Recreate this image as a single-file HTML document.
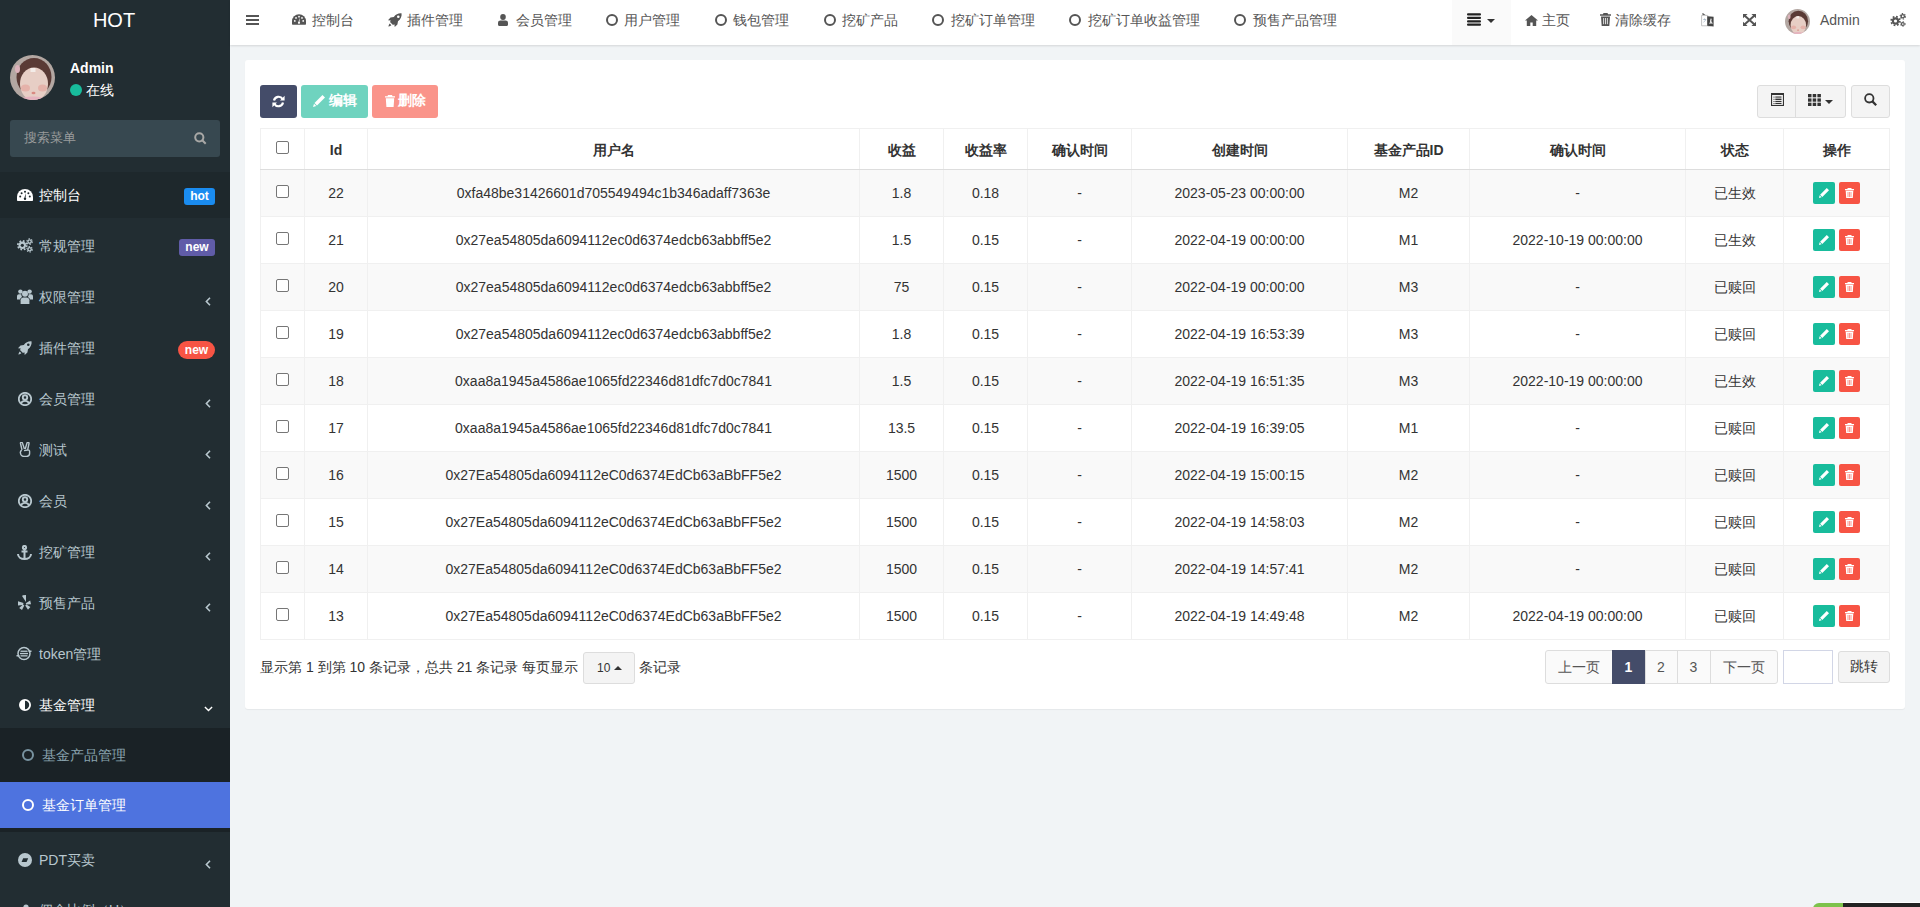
<!DOCTYPE html>
<html><head><meta charset="utf-8"><style>*{box-sizing:border-box}
html,body{margin:0;padding:0}
body{width:1920px;height:907px;overflow:hidden;position:relative;background:#f1f4f6;font-family:"Liberation Sans",sans-serif;font-size:14px;color:#333}
.abs{position:absolute}
svg{display:block}
.ava{border-radius:50%;overflow:hidden;background:radial-gradient(circle at 50% 60%,#f0c8bd 0,#e8b4a8 32%,#b98478 44%,#4a302a 58%,#8e6d63 100%)}
.badge{position:absolute;color:#fff;font-weight:bold;font-size:12px;text-align:center;line-height:17px;height:17px}
.nv{position:absolute;top:11px;line-height:18px;color:#555;font-size:14px;white-space:nowrap}
</style></head><body>
<div class="abs" style="left:0;top:0;width:230px;height:907px;background:#222d32"></div>
<div class="abs" style="left:0;top:10px;width:228px;text-align:center;color:#fff;font-size:20px;line-height:20px">HOT</div>
<svg class="abs" style="left:10px;top:55px" width="45" height="45" viewBox="0 0 45 45"><defs><clipPath id="cpa"><circle cx="22.5" cy="22.5" r="22.5"/></clipPath></defs><g clip-path="url(#cpa)"><rect width="45" height="45" fill="#b3a7a2"/><ellipse cx="24" cy="22" rx="17.5" ry="19" fill="#5a3a35"/><ellipse cx="24" cy="29" rx="14" ry="16.5" fill="#e7cec5"/><rect x="20.5" y="13" width="5" height="4" fill="#f3ece8"/><ellipse cx="15.5" cy="33" rx="4.5" ry="3.5" fill="#e5b2aa"/><ellipse cx="32.5" cy="33" rx="4.5" ry="3.5" fill="#e5b2aa"/><ellipse cx="23.5" cy="38" rx="2" ry="1.2" fill="#d98a82"/><path d="M5 45Q22.5 38 42 45z" fill="#e6b3bf"/><ellipse cx="7.5" cy="14" rx="2.5" ry="4" fill="#dcb2bb"/></g></svg>
<div class="abs" style="left:70px;top:60px;color:#fff;font-weight:bold;font-size:14px;line-height:16px">Admin</div>
<div class="abs" style="left:70px;top:84px;width:12px;height:12px;border-radius:50%;background:#18bc9c"></div>
<div class="abs" style="left:86px;top:82px;color:#fff;font-size:14px;line-height:16px">在线</div>
<div class="abs" style="left:10px;top:120px;width:210px;height:37px;background:#374850;border-radius:3px"></div>
<div class="abs" style="left:24px;top:130px;color:#9a9c9c;font-size:13px;line-height:16px">搜索菜单</div>
<svg class="abs" style="left:194px;top:132px;" width="13" height="13" viewBox="0 0 13 13"><circle cx="5.3" cy="5.3" r="4.1" fill="none" stroke="#a8a8a6" stroke-width="2"/><path d="M8.3 8.3l3.4 3.4" stroke="#a8a8a6" stroke-width="2"/></svg>
<div class="abs" style="left:0;top:172px;width:230px;height:46px;background:#1e282c"></div>
<div class="abs" style="left:0;top:728px;width:230px;height:104px;background:#1a2226"></div>
<div class="abs" style="left:0;top:782px;width:230px;height:46px;background:#4e73df"></div>
<svg class="abs" style="left:17px;top:189px;" width="16" height="12" viewBox="0 0 16 12"><path d="M8 0A8 8 0 0 0 0 8v3.2a.8.8 0 0 0 .8.8h14.4a.8.8 0 0 0 .8-.8V8A8 8 0 0 0 8 0z" fill="#fff"/><g fill="#1e282c"><circle cx="3.2" cy="7.6" r="1"/><circle cx="4.6" cy="4.2" r="1"/><circle cx="8" cy="2.8" r="1"/><circle cx="11.4" cy="4.2" r="1"/><circle cx="12.8" cy="7.6" r="1"/><path d="M8.9 3.9L8.6 8.7a1.2 1.2 0 1 1-1.2 0z"/></g></svg>
<div class="abs" style="left:39px;top:186px;color:#fff;font-size:14px;line-height:18px;white-space:nowrap;font-weight:normal">控制台</div>
<div class="badge" style="left:184px;top:188px;width:31px;background:#1a8cf0;border-radius:3px">hot</div>
<svg class="abs" style="left:17px;top:238px;" width="16" height="15" viewBox="0 0 16 15"><circle cx="5.3" cy="7.3" r="3.71" fill="#b8c7ce"/><circle cx="5.3" cy="7.3" r="4.45" fill="none" stroke="#b8c7ce" stroke-width="1.70" stroke-dasharray="1.75 1.75"/><circle cx="5.3" cy="7.3" r="1.59" fill="#222d32"/><circle cx="12.6" cy="3.6" r="2.31" fill="#b8c7ce"/><circle cx="12.6" cy="3.6" r="2.77" fill="none" stroke="#b8c7ce" stroke-width="1.06" stroke-dasharray="1.45 1.45"/><circle cx="12.6" cy="3.6" r="0.99" fill="#222d32"/><circle cx="12.6" cy="11.3" r="2.31" fill="#b8c7ce"/><circle cx="12.6" cy="11.3" r="2.77" fill="none" stroke="#b8c7ce" stroke-width="1.06" stroke-dasharray="1.45 1.45"/><circle cx="12.6" cy="11.3" r="0.99" fill="#222d32"/></svg>
<div class="abs" style="left:39px;top:237px;color:#b8c7ce;font-size:14px;line-height:18px;white-space:nowrap;font-weight:normal">常规管理</div>
<div class="badge" style="left:179px;top:239px;width:36px;background:#605ca8;border-radius:3px">new</div>
<svg class="abs" style="left:17px;top:289px;" width="16" height="15" viewBox="0 0 16 15"><g fill="#b8c7ce"><circle cx="8" cy="4.8" r="3"/><path d="M3.6 15V11.2C3.6 9.4 5 8.4 6.4 8.4h3.2C11 8.4 12.4 9.4 12.4 11.2V15z"/><circle cx="3.4" cy="2.6" r="2.2"/><circle cx="12.6" cy="2.6" r="2.2"/><path d="M0 10.6V7.4C0 6.2.9 5.3 1.9 5.3h2.5C4.3 6.4 4.6 7.4 5.2 8 4 8.6 3 9.6 3 10.6z"/><path d="M16 10.6V7.4C16 6.2 15.1 5.3 14.1 5.3h-2.5c.1 1.1-.2 2.1-.8 2.7 1.2.6 2.2 1.6 2.2 2.6z"/></g></svg>
<div class="abs" style="left:39px;top:288px;color:#b8c7ce;font-size:14px;line-height:18px;white-space:nowrap;font-weight:normal">权限管理</div>
<svg class="abs" style="left:205px;top:297px;" width="6" height="9" viewBox="0 0 6 9"><path d="M5 .8L1.4 4.5 5 8.2" fill="none" stroke="#b8c7ce" stroke-width="1.6"/></svg>
<svg class="abs" style="left:18px;top:341px;" width="14" height="14" viewBox="0 0 14 14"><path fill="#b8c7ce" d="M13.6.4C10.5.1 7.8 1.4 5.8 4L2.5 4.6 0 7.3l2.8.3L2 9l3 3 1.4-.8.3 2.8 2.7-2.5.6-3.3C12.6 6.2 13.9 3.5 13.6.4zM10.3 5a1.3 1.3 0 1 1 0-2.6 1.3 1.3 0 0 1 0 2.6zM1.8 10.6C.9 11.5.4 13.6.4 13.6s2.1-.5 3-1.4z"/></svg>
<div class="abs" style="left:39px;top:339px;color:#b8c7ce;font-size:14px;line-height:18px;white-space:nowrap;font-weight:normal">插件管理</div>
<div class="badge" style="left:178px;top:341px;width:37px;height:18px;line-height:18px;background:#f75444;border-radius:9px">new</div>
<svg class="abs" style="left:18px;top:392px;" width="14" height="14" viewBox="0 0 14 14"><circle cx="7" cy="7" r="6.2" fill="none" stroke="#b8c7ce" stroke-width="1.8"/><circle cx="7" cy="5.5" r="2.2" fill="none" stroke="#b8c7ce" stroke-width="1.9"/><path d="M2.9 11.4C3.7 9.7 5.2 8.9 7 8.9s3.3.8 4.1 2.5" fill="none" stroke="#b8c7ce" stroke-width="1.9"/></svg>
<div class="abs" style="left:39px;top:390px;color:#b8c7ce;font-size:14px;line-height:18px;white-space:nowrap;font-weight:normal">会员管理</div>
<svg class="abs" style="left:205px;top:399px;" width="6" height="9" viewBox="0 0 6 9"><path d="M5 .8L1.4 4.5 5 8.2" fill="none" stroke="#b8c7ce" stroke-width="1.6"/></svg>
<svg class="abs" style="left:19px;top:442px;" width="12" height="15" viewBox="0 0 12 15"><path fill="none" stroke="#b8c7ce" stroke-width="1.4" d="M3 8L1.5 1.5a1 1 0 0 1 2-.4L5.4 7M6.2 7L8 1a1 1 0 0 1 2 .5L8.6 8.2M3 8.2c-1.2.3-1.8 1.4-1.6 2.6l.4 1.6c.4 1.4 1.6 2 3 2h2.8c1.6 0 3-1.2 3-2.8V9.4c0-1-.8-1.6-1.8-1.4L5 8.6"/></svg>
<div class="abs" style="left:39px;top:441px;color:#b8c7ce;font-size:14px;line-height:18px;white-space:nowrap;font-weight:normal">测试</div>
<svg class="abs" style="left:205px;top:450px;" width="6" height="9" viewBox="0 0 6 9"><path d="M5 .8L1.4 4.5 5 8.2" fill="none" stroke="#b8c7ce" stroke-width="1.6"/></svg>
<svg class="abs" style="left:18px;top:494px;" width="14" height="14" viewBox="0 0 14 14"><circle cx="7" cy="7" r="6.2" fill="none" stroke="#b8c7ce" stroke-width="1.8"/><circle cx="7" cy="5.5" r="2.2" fill="none" stroke="#b8c7ce" stroke-width="1.9"/><path d="M2.9 11.4C3.7 9.7 5.2 8.9 7 8.9s3.3.8 4.1 2.5" fill="none" stroke="#b8c7ce" stroke-width="1.9"/></svg>
<div class="abs" style="left:39px;top:492px;color:#b8c7ce;font-size:14px;line-height:18px;white-space:nowrap;font-weight:normal">会员</div>
<svg class="abs" style="left:205px;top:501px;" width="6" height="9" viewBox="0 0 6 9"><path d="M5 .8L1.4 4.5 5 8.2" fill="none" stroke="#b8c7ce" stroke-width="1.6"/></svg>
<svg class="abs" style="left:17px;top:545px;" width="15" height="15" viewBox="0 0 15 15"><g fill="none" stroke="#b8c7ce" stroke-width="2"><circle cx="7.5" cy="2.5" r="1.6"/><path d="M7.5 4v10M4.5 6.5h6M1 9c0 3 3 5 6.5 5S14 12 14 9"/></g></svg>
<div class="abs" style="left:39px;top:543px;color:#b8c7ce;font-size:14px;line-height:18px;white-space:nowrap;font-weight:normal">挖矿管理</div>
<svg class="abs" style="left:205px;top:552px;" width="6" height="9" viewBox="0 0 6 9"><path d="M5 .8L1.4 4.5 5 8.2" fill="none" stroke="#b8c7ce" stroke-width="1.6"/></svg>
<svg class="abs" style="left:18px;top:595px;" width="13" height="15" viewBox="0 0 13 15"><g fill="#b8c7ce"><path d="M4.6 0.3L8 0v7L4.2 1.2z"/><path d="M0 6.3l5.5 1.8-.5 1.8L0 10.5z"/><path d="M1.2 13l3.8-3.6 1.3 1L4 15z"/><path d="M7.2 10.6l1.2-1.2 4 2.7-2.4 2.6z"/><path d="M7.8 8.2l4.4-2.6 .8 3.6-5 .4z"/></g></svg>
<div class="abs" style="left:39px;top:594px;color:#b8c7ce;font-size:14px;line-height:18px;white-space:nowrap;font-weight:normal">预售产品</div>
<svg class="abs" style="left:205px;top:603px;" width="6" height="9" viewBox="0 0 6 9"><path d="M5 .8L1.4 4.5 5 8.2" fill="none" stroke="#b8c7ce" stroke-width="1.6"/></svg>
<svg class="abs" style="left:16px;top:646px;" width="16" height="15" viewBox="0 0 16 15"><g fill="none" stroke="#b8c7ce" stroke-width="1.5"><circle cx="8" cy="7.5" r="6"/><path d="M.5 9.8h3M12.5 5.2h3"/></g><g fill="#b8c7ce"><rect x="4.5" y="4.6" width="7" height="1.3"/><rect x="4" y="6.9" width="8" height="1.3"/><rect x="4.5" y="9.2" width="7" height="1.3"/></g></svg>
<div class="abs" style="left:39px;top:645px;color:#b8c7ce;font-size:14px;line-height:18px;white-space:nowrap;font-weight:normal">token管理</div>
<svg class="abs" style="left:19px;top:699px;" width="12" height="12" viewBox="0 0 12 12"><circle cx="6" cy="6" r="5.1" fill="none" stroke="#fff" stroke-width="1.8"/><path d="M6 1a5 5 0 0 0 0 10z" fill="#fff"/></svg>
<div class="abs" style="left:39px;top:696px;color:#fff;font-size:14px;line-height:18px;white-space:nowrap;font-weight:normal">基金管理</div>
<svg class="abs" style="left:204px;top:706px;" width="9" height="6" viewBox="0 0 9 6"><path d="M.9 1l3.6 3.5L8.1 1" fill="none" stroke="#fff" stroke-width="1.4"/></svg>
<svg class="abs" style="left:18px;top:853px;" width="14" height="14" viewBox="0 0 14 14"><circle cx="7" cy="7" r="7" fill="#b8c7ce"/><path d="M5.2 5.2h5l-1.6 3.7h-5z" fill="#222d32"/></svg>
<div class="abs" style="left:39px;top:851px;color:#b8c7ce;font-size:14px;line-height:18px;white-space:nowrap;font-weight:normal">PDT买卖</div>
<svg class="abs" style="left:205px;top:860px;" width="6" height="9" viewBox="0 0 6 9"><path d="M5 .8L1.4 4.5 5 8.2" fill="none" stroke="#b8c7ce" stroke-width="1.6"/></svg>
<svg class="abs" style="left:21px;top:904px;" width="10" height="14" viewBox="0 0 10 14"><g fill="#b8c7ce"><circle cx="5" cy="3" r="2.6"/><path d="M0 13V9.5C0 7.6 1.4 6.6 2.8 6.6h4.4C8.6 6.6 10 7.6 10 9.5V13z"/></g></svg>
<div class="abs" style="left:39px;top:901px;color:#b8c7ce;font-size:14px;line-height:18px;white-space:nowrap;font-weight:normal">佣金比例（U）</div>
<svg class="abs" style="left:205px;top:910px;" width="6" height="9" viewBox="0 0 6 9"><path d="M5 .8L1.4 4.5 5 8.2" fill="none" stroke="#b8c7ce" stroke-width="1.6"/></svg>
<svg class="abs" style="left:22px;top:749px;" width="12" height="12" viewBox="0 0 12 12"><circle cx="6.0" cy="6.0" r="5.0" fill="none" stroke="#7893a0" stroke-width="2"/></svg>
<div class="abs" style="left:42px;top:746px;color:#8aa4af;font-size:14px;line-height:18px">基金产品管理</div>
<svg class="abs" style="left:22px;top:799px;" width="12" height="12" viewBox="0 0 12 12"><circle cx="6.0" cy="6.0" r="5.0" fill="none" stroke="#fff" stroke-width="2"/></svg>
<div class="abs" style="left:42px;top:796px;color:#fff;font-size:14px;line-height:18px">基金订单管理</div>
<div class="abs" style="left:230px;top:0;width:1690px;height:45px;background:#fff;box-shadow:0 1px 2px rgba(0,0,0,.12)"></div>
<svg class="abs" style="left:246px;top:15px;" width="13" height="10" viewBox="0 0 13 10"><g fill="#555"><rect y="0" width="13" height="2"/><rect y="4" width="13" height="2"/><rect y="8" width="13" height="2"/></g></svg>
<svg class="abs" style="left:292px;top:14px;" width="14" height="11" viewBox="0 0 16 12"><path d="M8 0A8 8 0 0 0 0 8v3.2a.8.8 0 0 0 .8.8h14.4a.8.8 0 0 0 .8-.8V8A8 8 0 0 0 8 0z" fill="#555"/><g fill="#fff"><circle cx="3.2" cy="7.6" r="1"/><circle cx="4.6" cy="4.2" r="1"/><circle cx="8" cy="2.8" r="1"/><circle cx="11.4" cy="4.2" r="1"/><circle cx="12.8" cy="7.6" r="1"/><path d="M8.9 3.9L8.6 8.7a1.2 1.2 0 1 1-1.2 0z"/></g></svg>
<div class="nv" style="left:312px">控制台</div>
<svg class="abs" style="left:388px;top:13px;" width="14" height="14" viewBox="0 0 14 14"><path fill="#555" d="M13.6.4C10.5.1 7.8 1.4 5.8 4L2.5 4.6 0 7.3l2.8.3L2 9l3 3 1.4-.8.3 2.8 2.7-2.5.6-3.3C12.6 6.2 13.9 3.5 13.6.4zM10.3 5a1.3 1.3 0 1 1 0-2.6 1.3 1.3 0 0 1 0 2.6zM1.8 10.6C.9 11.5.4 13.6.4 13.6s2.1-.5 3-1.4z"/></svg>
<div class="nv" style="left:407px">插件管理</div>
<svg class="abs" style="left:498px;top:14px;" width="10" height="12" viewBox="0 0 10 12"><g fill="#555"><ellipse cx="5" cy="3" rx="2.8" ry="3"/><path d="M0 10.5V9C0 7.4 1.2 6.6 2.4 6.6h5.2C8.8 6.6 10 7.4 10 9v1.5C10 11.4 9.4 12 8.6 12H1.4C.6 12 0 11.4 0 10.5z"/></g></svg>
<div class="nv" style="left:516px">会员管理</div>
<svg class="abs" style="left:606px;top:14px;" width="12" height="12" viewBox="0 0 12 12"><circle cx="6.0" cy="6.0" r="5.0" fill="none" stroke="#555" stroke-width="2"/></svg>
<div class="nv" style="left:624px">用户管理</div>
<svg class="abs" style="left:715px;top:14px;" width="12" height="12" viewBox="0 0 12 12"><circle cx="6.0" cy="6.0" r="5.0" fill="none" stroke="#555" stroke-width="2"/></svg>
<div class="nv" style="left:733px">钱包管理</div>
<svg class="abs" style="left:824px;top:14px;" width="12" height="12" viewBox="0 0 12 12"><circle cx="6.0" cy="6.0" r="5.0" fill="none" stroke="#555" stroke-width="2"/></svg>
<div class="nv" style="left:842px">挖矿产品</div>
<svg class="abs" style="left:932px;top:14px;" width="12" height="12" viewBox="0 0 12 12"><circle cx="6.0" cy="6.0" r="5.0" fill="none" stroke="#555" stroke-width="2"/></svg>
<div class="nv" style="left:951px">挖矿订单管理</div>
<svg class="abs" style="left:1069px;top:14px;" width="12" height="12" viewBox="0 0 12 12"><circle cx="6.0" cy="6.0" r="5.0" fill="none" stroke="#555" stroke-width="2"/></svg>
<div class="nv" style="left:1088px">挖矿订单收益管理</div>
<svg class="abs" style="left:1234px;top:14px;" width="12" height="12" viewBox="0 0 12 12"><circle cx="6.0" cy="6.0" r="5.0" fill="none" stroke="#555" stroke-width="2"/></svg>
<div class="nv" style="left:1253px">预售产品管理</div>
<div class="abs" style="left:1452px;top:0;width:59px;height:45px;background:#fafafa"></div>
<svg class="abs" style="left:1467px;top:13px;" width="14" height="13" viewBox="0 0 14 13"><g fill="#222"><rect y="0.2" width="14" height="2.4" rx="1"/><rect y="3.7" width="14" height="2.4" rx="1"/><rect y="7.2" width="14" height="2.4" rx="1"/><rect y="10.6" width="14" height="2.2" rx="1"/></g></svg>
<svg class="abs" style="left:1487px;top:19px;" width="8" height="4" viewBox="0 0 8 4"><path d="M0 0h8L4 4z" fill="#333"/></svg>
<svg class="abs" style="left:1525px;top:15px;" width="13" height="11" viewBox="0 0 13 11"><path fill="#555" d="M6.5 0L0 5.6h1.8V11h3.5V7.5h2.4V11h3.5V5.6H13z"/></svg>
<div class="nv" style="left:1542px">主页</div>
<svg class="abs" style="left:1600px;top:13px;" width="11" height="13" viewBox="0 0 11 13"><path fill="#555" d="M3.5 0h4l.6 1.2H11v1.6H0V1.2h2.9zM1 3.6h9l-.7 9.4H1.7z"/><path d="M3.6 5v6.2M5.5 5v6.2M7.4 5v6.2" stroke="#fff" stroke-width=".8"/></svg>
<div class="nv" style="left:1615px">清除缓存</div>
<svg class="abs" style="left:1701px;top:13px;" width="13" height="14" viewBox="0 0 13 14"><path d="M.6 2.4h6.2l.4 10.4H.6z" fill="none" stroke="#bbb" stroke-width=".9"/><path d="M1.5 0l3 1.8H1.5z" fill="#333"/><path d="M2.2 6.5h3M3.6 5.4v1.2M2.5 9.2l2.4-2.3" stroke="#9ab" stroke-width=".7" fill="none"/><path d="M6.2 3.2l6.4.6v9.6l-6.4-.6z" fill="#444"/><path d="M8.5 11l1.1-5.6h.8l1.1 5.6h-.9l-.3-1.4H9.7l-.3 1.4zm1.3-2.3h.9l-.45-2.1z" fill="#fff"/><path d="M7 13.6h3.8" stroke="#ccc" stroke-width=".7"/></svg>
<svg class="abs" style="left:1743px;top:14px;" width="13" height="12" viewBox="0 0 13 12"><g fill="#555"><path d="M0 0h4.6L0 4.3zM13 0H8.4L13 4.3zM0 12h4.6L0 7.7zM13 12H8.4L13 7.7z"/></g><path d="M1.5 1.4l10 9.2M11.5 1.4l-10 9.2" stroke="#555" stroke-width="2"/></svg>
<svg class="abs" style="left:1785px;top:9px" width="25" height="25" viewBox="0 0 45 45"><defs><clipPath id="cpb"><circle cx="22.5" cy="22.5" r="22.5"/></clipPath></defs><g clip-path="url(#cpb)"><rect width="45" height="45" fill="#b3a7a2"/><ellipse cx="24" cy="22" rx="17.5" ry="19" fill="#5a3a35"/><ellipse cx="24" cy="29" rx="14" ry="16.5" fill="#e7cec5"/><rect x="20.5" y="13" width="5" height="4" fill="#f3ece8"/><ellipse cx="15.5" cy="33" rx="4.5" ry="3.5" fill="#e5b2aa"/><ellipse cx="32.5" cy="33" rx="4.5" ry="3.5" fill="#e5b2aa"/><ellipse cx="23.5" cy="38" rx="2" ry="1.2" fill="#d98a82"/><path d="M5 45Q22.5 38 42 45z" fill="#e6b3bf"/><ellipse cx="7.5" cy="14" rx="2.5" ry="4" fill="#dcb2bb"/></g></svg>
<div class="nv" style="left:1820px">Admin</div>
<svg class="abs" style="left:1890px;top:13px;" width="16" height="14" viewBox="0 0 16 14"><circle cx="5.5" cy="8" r="3.64" fill="#555"/><circle cx="5.5" cy="8" r="4.37" fill="none" stroke="#555" stroke-width="1.66" stroke-dasharray="1.72 1.72"/><circle cx="5.5" cy="8" r="1.56" fill="#fff"/><circle cx="12.8" cy="3.3" r="2.24" fill="#555"/><circle cx="12.8" cy="3.3" r="2.69" fill="none" stroke="#555" stroke-width="1.02" stroke-dasharray="1.41 1.41"/><circle cx="12.8" cy="3.3" r="0.96" fill="#fff"/><circle cx="12.8" cy="11" r="1.96" fill="#555"/><circle cx="12.8" cy="11" r="2.35" fill="none" stroke="#555" stroke-width="0.90" stroke-dasharray="1.23 1.23"/><circle cx="12.8" cy="11" r="0.84" fill="#fff"/></svg>
<div class="abs" style="left:245px;top:60px;width:1660px;height:649px;background:#fff;border-radius:3px;box-shadow:0 1px 1px rgba(0,0,0,.05)"></div>
<div class="abs" style="left:260px;top:85px;width:37px;height:33px;background:#444c69;border-radius:3px"></div>
<svg class="abs" style="left:272px;top:95px;" width="13" height="13" viewBox="0 0 13 13"><g fill="none" stroke="#fff" stroke-width="2.2"><path d="M2 5.5A4.7 4.7 0 0 1 10.6 4"/><path d="M11 7.5A4.7 4.7 0 0 1 2.4 9"/></g><path d="M12.6 .8v4.6H8z M.4 12.2V7.6H5z" fill="#fff"/></svg>
<div class="abs" style="left:301px;top:85px;width:67px;height:33px;background:#6fd3bf;border-radius:3px"></div>
<svg class="abs" style="left:313px;top:95px;" width="12" height="12" viewBox="0 0 12 12"><path fill="#fff" d="M9.5 0L12 2.5 4 10.5 1.5 8zM1 8.8l2.3 2.3L0 12z"/></svg>
<div class="abs" style="left:329px;top:92px;color:#fff;font-size:14px;font-weight:bold;line-height:17px">编辑</div>
<div class="abs" style="left:372px;top:85px;width:66px;height:33px;background:#fa948a;border-radius:3px"></div>
<svg class="abs" style="left:385px;top:95px;" width="10" height="12" viewBox="0 0 10 12"><path fill="#fff" d="M3 0h4l.5 1.2H10v1.4H0V1.2h2.5zM.8 3.3h8.4l-.6 8.7H1.4z"/></svg>
<div class="abs" style="left:398px;top:92px;color:#fff;font-size:14px;font-weight:bold;line-height:17px">删除</div>
<div class="abs" style="left:1757px;top:85px;width:89px;height:33px;background:#f4f4f4;border:1px solid #ddd;border-radius:3px"></div>
<div class="abs" style="left:1795px;top:86px;width:1px;height:31px;background:#ddd"></div>
<svg class="abs" style="left:1771px;top:93px;" width="13" height="13" viewBox="0 0 13 13"><g fill="none" stroke="#333" stroke-width="1.1"><rect x=".55" y="1" width="11.9" height="11.45"/></g><rect x="0" y="0" width="13" height="2" fill="#333"/><g fill="#333"><rect x="2.5" y="3.6" width="1" height="1"/><rect x="4.3" y="3.5" width="6.2" height="1.1"/><rect x="2.5" y="5.8" width="1" height="1"/><rect x="4.3" y="5.6" width="6.2" height="1.4"/><rect x="2.5" y="8" width="1" height="1"/><rect x="4.3" y="7.9" width="6.2" height="1.1"/><rect x="2.5" y="10" width="1" height="1"/><rect x="4.3" y="9.9" width="6.2" height="1.1"/></g></svg>
<svg class="abs" style="left:1808px;top:94px;" width="13" height="12" viewBox="0 0 13 12"><g fill="#333"><rect x="0" y="0" width="3.5" height="3.3"/><rect x="4.7" y="0" width="3.5" height="3.3"/><rect x="9.4" y="0" width="3.5" height="3.3"/><rect x="0" y="4.4" width="3.5" height="3.3"/><rect x="4.7" y="4.4" width="3.5" height="3.3"/><rect x="9.4" y="4.4" width="3.5" height="3.3"/><rect x="0" y="8.7" width="3.5" height="3.3"/><rect x="4.7" y="8.7" width="3.5" height="3.3"/><rect x="9.4" y="8.7" width="3.5" height="3.3"/></g></svg>
<svg class="abs" style="left:1825px;top:100px;" width="8" height="4" viewBox="0 0 8 4"><path d="M0 0h8L4 4z" fill="#333"/></svg>
<div class="abs" style="left:1851px;top:85px;width:39px;height:33px;background:#f4f4f4;border:1px solid #ddd;border-radius:3px"></div>
<svg class="abs" style="left:1864px;top:93px;" width="13" height="13" viewBox="0 0 13 13"><circle cx="5.3" cy="5.3" r="4.2" fill="none" stroke="#333" stroke-width="1.8"/><path d="M8.4 8.4l3.8 3.8" stroke="#333" stroke-width="2.2"/></svg>
<div class="abs" style="left:260px;top:128px;width:1630px;height:1px;background:#f0f0f0"></div>
<div class="abs" style="left:261px;top:170px;width:1628px;height:46px;background:#f9f9f9"></div>
<div class="abs" style="left:260px;top:216px;width:1630px;height:1px;background:#f0f0f0"></div>
<div class="abs" style="left:260px;top:263px;width:1630px;height:1px;background:#f0f0f0"></div>
<div class="abs" style="left:261px;top:264px;width:1628px;height:46px;background:#f9f9f9"></div>
<div class="abs" style="left:260px;top:310px;width:1630px;height:1px;background:#f0f0f0"></div>
<div class="abs" style="left:260px;top:357px;width:1630px;height:1px;background:#f0f0f0"></div>
<div class="abs" style="left:261px;top:358px;width:1628px;height:46px;background:#f9f9f9"></div>
<div class="abs" style="left:260px;top:404px;width:1630px;height:1px;background:#f0f0f0"></div>
<div class="abs" style="left:260px;top:451px;width:1630px;height:1px;background:#f0f0f0"></div>
<div class="abs" style="left:261px;top:452px;width:1628px;height:46px;background:#f9f9f9"></div>
<div class="abs" style="left:260px;top:498px;width:1630px;height:1px;background:#f0f0f0"></div>
<div class="abs" style="left:260px;top:545px;width:1630px;height:1px;background:#f0f0f0"></div>
<div class="abs" style="left:261px;top:546px;width:1628px;height:46px;background:#f9f9f9"></div>
<div class="abs" style="left:260px;top:592px;width:1630px;height:1px;background:#f0f0f0"></div>
<div class="abs" style="left:260px;top:639px;width:1630px;height:1px;background:#f0f0f0"></div>
<div class="abs" style="left:260px;top:128px;width:1px;height:512px;background:#f0f0f0"></div>
<div class="abs" style="left:304px;top:128px;width:1px;height:512px;background:#f0f0f0"></div>
<div class="abs" style="left:367px;top:128px;width:1px;height:512px;background:#f0f0f0"></div>
<div class="abs" style="left:859px;top:128px;width:1px;height:512px;background:#f0f0f0"></div>
<div class="abs" style="left:943px;top:128px;width:1px;height:512px;background:#f0f0f0"></div>
<div class="abs" style="left:1027px;top:128px;width:1px;height:512px;background:#f0f0f0"></div>
<div class="abs" style="left:1131px;top:128px;width:1px;height:512px;background:#f0f0f0"></div>
<div class="abs" style="left:1347px;top:128px;width:1px;height:512px;background:#f0f0f0"></div>
<div class="abs" style="left:1469px;top:128px;width:1px;height:512px;background:#f0f0f0"></div>
<div class="abs" style="left:1685px;top:128px;width:1px;height:512px;background:#f0f0f0"></div>
<div class="abs" style="left:1783px;top:128px;width:1px;height:512px;background:#f0f0f0"></div>
<div class="abs" style="left:1889px;top:128px;width:1px;height:512px;background:#f0f0f0"></div>
<div class="abs" style="left:260px;top:169px;width:1630px;height:1px;background:#ddd"></div>
<div class="abs" style="left:276px;top:141px;width:13px;height:13px;border:1px solid #767676;border-radius:2px;background:#fff"></div>
<div class="abs" style="left:305px;top:130px;width:62px;height:40px;line-height:40px;text-align:center;white-space:nowrap;font-weight:bold;color:#333">Id</div>
<div class="abs" style="left:368px;top:130px;width:491px;height:40px;line-height:40px;text-align:center;white-space:nowrap;font-weight:bold;color:#333">用户名</div>
<div class="abs" style="left:860px;top:130px;width:83px;height:40px;line-height:40px;text-align:center;white-space:nowrap;font-weight:bold;color:#333">收益</div>
<div class="abs" style="left:944px;top:130px;width:83px;height:40px;line-height:40px;text-align:center;white-space:nowrap;font-weight:bold;color:#333">收益率</div>
<div class="abs" style="left:1028px;top:130px;width:103px;height:40px;line-height:40px;text-align:center;white-space:nowrap;font-weight:bold;color:#333">确认时间</div>
<div class="abs" style="left:1132px;top:130px;width:215px;height:40px;line-height:40px;text-align:center;white-space:nowrap;font-weight:bold;color:#333">创建时间</div>
<div class="abs" style="left:1348px;top:130px;width:121px;height:40px;line-height:40px;text-align:center;white-space:nowrap;font-weight:bold;color:#333">基金产品ID</div>
<div class="abs" style="left:1470px;top:130px;width:215px;height:40px;line-height:40px;text-align:center;white-space:nowrap;font-weight:bold;color:#333">确认时间</div>
<div class="abs" style="left:1686px;top:130px;width:97px;height:40px;line-height:40px;text-align:center;white-space:nowrap;font-weight:bold;color:#333">状态</div>
<div class="abs" style="left:1784px;top:130px;width:106px;height:40px;line-height:40px;text-align:center;white-space:nowrap;font-weight:bold;color:#333">操作</div>
<div class="abs" style="left:276px;top:185px;width:13px;height:13px;border:1px solid #767676;border-radius:2px;background:#fff"></div>
<div class="abs" style="left:305px;top:170px;width:62px;height:46px;line-height:46px;text-align:center;white-space:nowrap;color:#333">22</div>
<div class="abs" style="left:368px;top:170px;width:491px;height:46px;line-height:46px;text-align:center;white-space:nowrap;color:#333">0xfa48be31426601d705549494c1b346adaff7363e</div>
<div class="abs" style="left:860px;top:170px;width:83px;height:46px;line-height:46px;text-align:center;white-space:nowrap;color:#333">1.8</div>
<div class="abs" style="left:944px;top:170px;width:83px;height:46px;line-height:46px;text-align:center;white-space:nowrap;color:#333">0.18</div>
<div class="abs" style="left:1028px;top:170px;width:103px;height:46px;line-height:46px;text-align:center;white-space:nowrap;color:#333">-</div>
<div class="abs" style="left:1132px;top:170px;width:215px;height:46px;line-height:46px;text-align:center;white-space:nowrap;color:#333">2023-05-23 00:00:00</div>
<div class="abs" style="left:1348px;top:170px;width:121px;height:46px;line-height:46px;text-align:center;white-space:nowrap;color:#333">M2</div>
<div class="abs" style="left:1470px;top:170px;width:215px;height:46px;line-height:46px;text-align:center;white-space:nowrap;color:#333">-</div>
<div class="abs" style="left:1686px;top:170px;width:97px;height:46px;line-height:46px;text-align:center;white-space:nowrap;color:#333">已生效</div>
<div class="abs" style="left:1813px;top:182px;width:22px;height:22px;background:#18bc9c;border-radius:2px"></div>
<svg class="abs" style="left:1819px;top:188px;" width="10" height="10" viewBox="0 0 10 10"><path fill="#fff" d="M7.8 0L10 2.2 3.3 8.9 1.1 6.7zM.6 7.3l2 2L0 10z"/></svg>
<div class="abs" style="left:1839px;top:182px;width:21px;height:22px;background:#f75444;border-radius:2px"></div>
<svg class="abs" style="left:1845px;top:188px;" width="9" height="10" viewBox="0 0 9 10"><path fill="#fff" d="M2.7 0h3.6l.4 1H9v1.2H0V1h2.3zM.7 2.8h7.6l-.5 7.2H1.2z"/><path d="M3 4v5M4.5 4v5M6 4v5" stroke="#f75444" stroke-width=".6"/></svg>
<div class="abs" style="left:276px;top:232px;width:13px;height:13px;border:1px solid #767676;border-radius:2px;background:#fff"></div>
<div class="abs" style="left:305px;top:217px;width:62px;height:46px;line-height:46px;text-align:center;white-space:nowrap;color:#333">21</div>
<div class="abs" style="left:368px;top:217px;width:491px;height:46px;line-height:46px;text-align:center;white-space:nowrap;color:#333">0x27ea54805da6094112ec0d6374edcb63abbff5e2</div>
<div class="abs" style="left:860px;top:217px;width:83px;height:46px;line-height:46px;text-align:center;white-space:nowrap;color:#333">1.5</div>
<div class="abs" style="left:944px;top:217px;width:83px;height:46px;line-height:46px;text-align:center;white-space:nowrap;color:#333">0.15</div>
<div class="abs" style="left:1028px;top:217px;width:103px;height:46px;line-height:46px;text-align:center;white-space:nowrap;color:#333">-</div>
<div class="abs" style="left:1132px;top:217px;width:215px;height:46px;line-height:46px;text-align:center;white-space:nowrap;color:#333">2022-04-19 00:00:00</div>
<div class="abs" style="left:1348px;top:217px;width:121px;height:46px;line-height:46px;text-align:center;white-space:nowrap;color:#333">M1</div>
<div class="abs" style="left:1470px;top:217px;width:215px;height:46px;line-height:46px;text-align:center;white-space:nowrap;color:#333">2022-10-19 00:00:00</div>
<div class="abs" style="left:1686px;top:217px;width:97px;height:46px;line-height:46px;text-align:center;white-space:nowrap;color:#333">已生效</div>
<div class="abs" style="left:1813px;top:229px;width:22px;height:22px;background:#18bc9c;border-radius:2px"></div>
<svg class="abs" style="left:1819px;top:235px;" width="10" height="10" viewBox="0 0 10 10"><path fill="#fff" d="M7.8 0L10 2.2 3.3 8.9 1.1 6.7zM.6 7.3l2 2L0 10z"/></svg>
<div class="abs" style="left:1839px;top:229px;width:21px;height:22px;background:#f75444;border-radius:2px"></div>
<svg class="abs" style="left:1845px;top:235px;" width="9" height="10" viewBox="0 0 9 10"><path fill="#fff" d="M2.7 0h3.6l.4 1H9v1.2H0V1h2.3zM.7 2.8h7.6l-.5 7.2H1.2z"/><path d="M3 4v5M4.5 4v5M6 4v5" stroke="#f75444" stroke-width=".6"/></svg>
<div class="abs" style="left:276px;top:279px;width:13px;height:13px;border:1px solid #767676;border-radius:2px;background:#fff"></div>
<div class="abs" style="left:305px;top:264px;width:62px;height:46px;line-height:46px;text-align:center;white-space:nowrap;color:#333">20</div>
<div class="abs" style="left:368px;top:264px;width:491px;height:46px;line-height:46px;text-align:center;white-space:nowrap;color:#333">0x27ea54805da6094112ec0d6374edcb63abbff5e2</div>
<div class="abs" style="left:860px;top:264px;width:83px;height:46px;line-height:46px;text-align:center;white-space:nowrap;color:#333">75</div>
<div class="abs" style="left:944px;top:264px;width:83px;height:46px;line-height:46px;text-align:center;white-space:nowrap;color:#333">0.15</div>
<div class="abs" style="left:1028px;top:264px;width:103px;height:46px;line-height:46px;text-align:center;white-space:nowrap;color:#333">-</div>
<div class="abs" style="left:1132px;top:264px;width:215px;height:46px;line-height:46px;text-align:center;white-space:nowrap;color:#333">2022-04-19 00:00:00</div>
<div class="abs" style="left:1348px;top:264px;width:121px;height:46px;line-height:46px;text-align:center;white-space:nowrap;color:#333">M3</div>
<div class="abs" style="left:1470px;top:264px;width:215px;height:46px;line-height:46px;text-align:center;white-space:nowrap;color:#333">-</div>
<div class="abs" style="left:1686px;top:264px;width:97px;height:46px;line-height:46px;text-align:center;white-space:nowrap;color:#333">已赎回</div>
<div class="abs" style="left:1813px;top:276px;width:22px;height:22px;background:#18bc9c;border-radius:2px"></div>
<svg class="abs" style="left:1819px;top:282px;" width="10" height="10" viewBox="0 0 10 10"><path fill="#fff" d="M7.8 0L10 2.2 3.3 8.9 1.1 6.7zM.6 7.3l2 2L0 10z"/></svg>
<div class="abs" style="left:1839px;top:276px;width:21px;height:22px;background:#f75444;border-radius:2px"></div>
<svg class="abs" style="left:1845px;top:282px;" width="9" height="10" viewBox="0 0 9 10"><path fill="#fff" d="M2.7 0h3.6l.4 1H9v1.2H0V1h2.3zM.7 2.8h7.6l-.5 7.2H1.2z"/><path d="M3 4v5M4.5 4v5M6 4v5" stroke="#f75444" stroke-width=".6"/></svg>
<div class="abs" style="left:276px;top:326px;width:13px;height:13px;border:1px solid #767676;border-radius:2px;background:#fff"></div>
<div class="abs" style="left:305px;top:311px;width:62px;height:46px;line-height:46px;text-align:center;white-space:nowrap;color:#333">19</div>
<div class="abs" style="left:368px;top:311px;width:491px;height:46px;line-height:46px;text-align:center;white-space:nowrap;color:#333">0x27ea54805da6094112ec0d6374edcb63abbff5e2</div>
<div class="abs" style="left:860px;top:311px;width:83px;height:46px;line-height:46px;text-align:center;white-space:nowrap;color:#333">1.8</div>
<div class="abs" style="left:944px;top:311px;width:83px;height:46px;line-height:46px;text-align:center;white-space:nowrap;color:#333">0.15</div>
<div class="abs" style="left:1028px;top:311px;width:103px;height:46px;line-height:46px;text-align:center;white-space:nowrap;color:#333">-</div>
<div class="abs" style="left:1132px;top:311px;width:215px;height:46px;line-height:46px;text-align:center;white-space:nowrap;color:#333">2022-04-19 16:53:39</div>
<div class="abs" style="left:1348px;top:311px;width:121px;height:46px;line-height:46px;text-align:center;white-space:nowrap;color:#333">M3</div>
<div class="abs" style="left:1470px;top:311px;width:215px;height:46px;line-height:46px;text-align:center;white-space:nowrap;color:#333">-</div>
<div class="abs" style="left:1686px;top:311px;width:97px;height:46px;line-height:46px;text-align:center;white-space:nowrap;color:#333">已赎回</div>
<div class="abs" style="left:1813px;top:323px;width:22px;height:22px;background:#18bc9c;border-radius:2px"></div>
<svg class="abs" style="left:1819px;top:329px;" width="10" height="10" viewBox="0 0 10 10"><path fill="#fff" d="M7.8 0L10 2.2 3.3 8.9 1.1 6.7zM.6 7.3l2 2L0 10z"/></svg>
<div class="abs" style="left:1839px;top:323px;width:21px;height:22px;background:#f75444;border-radius:2px"></div>
<svg class="abs" style="left:1845px;top:329px;" width="9" height="10" viewBox="0 0 9 10"><path fill="#fff" d="M2.7 0h3.6l.4 1H9v1.2H0V1h2.3zM.7 2.8h7.6l-.5 7.2H1.2z"/><path d="M3 4v5M4.5 4v5M6 4v5" stroke="#f75444" stroke-width=".6"/></svg>
<div class="abs" style="left:276px;top:373px;width:13px;height:13px;border:1px solid #767676;border-radius:2px;background:#fff"></div>
<div class="abs" style="left:305px;top:358px;width:62px;height:46px;line-height:46px;text-align:center;white-space:nowrap;color:#333">18</div>
<div class="abs" style="left:368px;top:358px;width:491px;height:46px;line-height:46px;text-align:center;white-space:nowrap;color:#333">0xaa8a1945a4586ae1065fd22346d81dfc7d0c7841</div>
<div class="abs" style="left:860px;top:358px;width:83px;height:46px;line-height:46px;text-align:center;white-space:nowrap;color:#333">1.5</div>
<div class="abs" style="left:944px;top:358px;width:83px;height:46px;line-height:46px;text-align:center;white-space:nowrap;color:#333">0.15</div>
<div class="abs" style="left:1028px;top:358px;width:103px;height:46px;line-height:46px;text-align:center;white-space:nowrap;color:#333">-</div>
<div class="abs" style="left:1132px;top:358px;width:215px;height:46px;line-height:46px;text-align:center;white-space:nowrap;color:#333">2022-04-19 16:51:35</div>
<div class="abs" style="left:1348px;top:358px;width:121px;height:46px;line-height:46px;text-align:center;white-space:nowrap;color:#333">M3</div>
<div class="abs" style="left:1470px;top:358px;width:215px;height:46px;line-height:46px;text-align:center;white-space:nowrap;color:#333">2022-10-19 00:00:00</div>
<div class="abs" style="left:1686px;top:358px;width:97px;height:46px;line-height:46px;text-align:center;white-space:nowrap;color:#333">已生效</div>
<div class="abs" style="left:1813px;top:370px;width:22px;height:22px;background:#18bc9c;border-radius:2px"></div>
<svg class="abs" style="left:1819px;top:376px;" width="10" height="10" viewBox="0 0 10 10"><path fill="#fff" d="M7.8 0L10 2.2 3.3 8.9 1.1 6.7zM.6 7.3l2 2L0 10z"/></svg>
<div class="abs" style="left:1839px;top:370px;width:21px;height:22px;background:#f75444;border-radius:2px"></div>
<svg class="abs" style="left:1845px;top:376px;" width="9" height="10" viewBox="0 0 9 10"><path fill="#fff" d="M2.7 0h3.6l.4 1H9v1.2H0V1h2.3zM.7 2.8h7.6l-.5 7.2H1.2z"/><path d="M3 4v5M4.5 4v5M6 4v5" stroke="#f75444" stroke-width=".6"/></svg>
<div class="abs" style="left:276px;top:420px;width:13px;height:13px;border:1px solid #767676;border-radius:2px;background:#fff"></div>
<div class="abs" style="left:305px;top:405px;width:62px;height:46px;line-height:46px;text-align:center;white-space:nowrap;color:#333">17</div>
<div class="abs" style="left:368px;top:405px;width:491px;height:46px;line-height:46px;text-align:center;white-space:nowrap;color:#333">0xaa8a1945a4586ae1065fd22346d81dfc7d0c7841</div>
<div class="abs" style="left:860px;top:405px;width:83px;height:46px;line-height:46px;text-align:center;white-space:nowrap;color:#333">13.5</div>
<div class="abs" style="left:944px;top:405px;width:83px;height:46px;line-height:46px;text-align:center;white-space:nowrap;color:#333">0.15</div>
<div class="abs" style="left:1028px;top:405px;width:103px;height:46px;line-height:46px;text-align:center;white-space:nowrap;color:#333">-</div>
<div class="abs" style="left:1132px;top:405px;width:215px;height:46px;line-height:46px;text-align:center;white-space:nowrap;color:#333">2022-04-19 16:39:05</div>
<div class="abs" style="left:1348px;top:405px;width:121px;height:46px;line-height:46px;text-align:center;white-space:nowrap;color:#333">M1</div>
<div class="abs" style="left:1470px;top:405px;width:215px;height:46px;line-height:46px;text-align:center;white-space:nowrap;color:#333">-</div>
<div class="abs" style="left:1686px;top:405px;width:97px;height:46px;line-height:46px;text-align:center;white-space:nowrap;color:#333">已赎回</div>
<div class="abs" style="left:1813px;top:417px;width:22px;height:22px;background:#18bc9c;border-radius:2px"></div>
<svg class="abs" style="left:1819px;top:423px;" width="10" height="10" viewBox="0 0 10 10"><path fill="#fff" d="M7.8 0L10 2.2 3.3 8.9 1.1 6.7zM.6 7.3l2 2L0 10z"/></svg>
<div class="abs" style="left:1839px;top:417px;width:21px;height:22px;background:#f75444;border-radius:2px"></div>
<svg class="abs" style="left:1845px;top:423px;" width="9" height="10" viewBox="0 0 9 10"><path fill="#fff" d="M2.7 0h3.6l.4 1H9v1.2H0V1h2.3zM.7 2.8h7.6l-.5 7.2H1.2z"/><path d="M3 4v5M4.5 4v5M6 4v5" stroke="#f75444" stroke-width=".6"/></svg>
<div class="abs" style="left:276px;top:467px;width:13px;height:13px;border:1px solid #767676;border-radius:2px;background:#fff"></div>
<div class="abs" style="left:305px;top:452px;width:62px;height:46px;line-height:46px;text-align:center;white-space:nowrap;color:#333">16</div>
<div class="abs" style="left:368px;top:452px;width:491px;height:46px;line-height:46px;text-align:center;white-space:nowrap;color:#333">0x27Ea54805da6094112eC0d6374EdCb63aBbFF5e2</div>
<div class="abs" style="left:860px;top:452px;width:83px;height:46px;line-height:46px;text-align:center;white-space:nowrap;color:#333">1500</div>
<div class="abs" style="left:944px;top:452px;width:83px;height:46px;line-height:46px;text-align:center;white-space:nowrap;color:#333">0.15</div>
<div class="abs" style="left:1028px;top:452px;width:103px;height:46px;line-height:46px;text-align:center;white-space:nowrap;color:#333">-</div>
<div class="abs" style="left:1132px;top:452px;width:215px;height:46px;line-height:46px;text-align:center;white-space:nowrap;color:#333">2022-04-19 15:00:15</div>
<div class="abs" style="left:1348px;top:452px;width:121px;height:46px;line-height:46px;text-align:center;white-space:nowrap;color:#333">M2</div>
<div class="abs" style="left:1470px;top:452px;width:215px;height:46px;line-height:46px;text-align:center;white-space:nowrap;color:#333">-</div>
<div class="abs" style="left:1686px;top:452px;width:97px;height:46px;line-height:46px;text-align:center;white-space:nowrap;color:#333">已赎回</div>
<div class="abs" style="left:1813px;top:464px;width:22px;height:22px;background:#18bc9c;border-radius:2px"></div>
<svg class="abs" style="left:1819px;top:470px;" width="10" height="10" viewBox="0 0 10 10"><path fill="#fff" d="M7.8 0L10 2.2 3.3 8.9 1.1 6.7zM.6 7.3l2 2L0 10z"/></svg>
<div class="abs" style="left:1839px;top:464px;width:21px;height:22px;background:#f75444;border-radius:2px"></div>
<svg class="abs" style="left:1845px;top:470px;" width="9" height="10" viewBox="0 0 9 10"><path fill="#fff" d="M2.7 0h3.6l.4 1H9v1.2H0V1h2.3zM.7 2.8h7.6l-.5 7.2H1.2z"/><path d="M3 4v5M4.5 4v5M6 4v5" stroke="#f75444" stroke-width=".6"/></svg>
<div class="abs" style="left:276px;top:514px;width:13px;height:13px;border:1px solid #767676;border-radius:2px;background:#fff"></div>
<div class="abs" style="left:305px;top:499px;width:62px;height:46px;line-height:46px;text-align:center;white-space:nowrap;color:#333">15</div>
<div class="abs" style="left:368px;top:499px;width:491px;height:46px;line-height:46px;text-align:center;white-space:nowrap;color:#333">0x27Ea54805da6094112eC0d6374EdCb63aBbFF5e2</div>
<div class="abs" style="left:860px;top:499px;width:83px;height:46px;line-height:46px;text-align:center;white-space:nowrap;color:#333">1500</div>
<div class="abs" style="left:944px;top:499px;width:83px;height:46px;line-height:46px;text-align:center;white-space:nowrap;color:#333">0.15</div>
<div class="abs" style="left:1028px;top:499px;width:103px;height:46px;line-height:46px;text-align:center;white-space:nowrap;color:#333">-</div>
<div class="abs" style="left:1132px;top:499px;width:215px;height:46px;line-height:46px;text-align:center;white-space:nowrap;color:#333">2022-04-19 14:58:03</div>
<div class="abs" style="left:1348px;top:499px;width:121px;height:46px;line-height:46px;text-align:center;white-space:nowrap;color:#333">M2</div>
<div class="abs" style="left:1470px;top:499px;width:215px;height:46px;line-height:46px;text-align:center;white-space:nowrap;color:#333">-</div>
<div class="abs" style="left:1686px;top:499px;width:97px;height:46px;line-height:46px;text-align:center;white-space:nowrap;color:#333">已赎回</div>
<div class="abs" style="left:1813px;top:511px;width:22px;height:22px;background:#18bc9c;border-radius:2px"></div>
<svg class="abs" style="left:1819px;top:517px;" width="10" height="10" viewBox="0 0 10 10"><path fill="#fff" d="M7.8 0L10 2.2 3.3 8.9 1.1 6.7zM.6 7.3l2 2L0 10z"/></svg>
<div class="abs" style="left:1839px;top:511px;width:21px;height:22px;background:#f75444;border-radius:2px"></div>
<svg class="abs" style="left:1845px;top:517px;" width="9" height="10" viewBox="0 0 9 10"><path fill="#fff" d="M2.7 0h3.6l.4 1H9v1.2H0V1h2.3zM.7 2.8h7.6l-.5 7.2H1.2z"/><path d="M3 4v5M4.5 4v5M6 4v5" stroke="#f75444" stroke-width=".6"/></svg>
<div class="abs" style="left:276px;top:561px;width:13px;height:13px;border:1px solid #767676;border-radius:2px;background:#fff"></div>
<div class="abs" style="left:305px;top:546px;width:62px;height:46px;line-height:46px;text-align:center;white-space:nowrap;color:#333">14</div>
<div class="abs" style="left:368px;top:546px;width:491px;height:46px;line-height:46px;text-align:center;white-space:nowrap;color:#333">0x27Ea54805da6094112eC0d6374EdCb63aBbFF5e2</div>
<div class="abs" style="left:860px;top:546px;width:83px;height:46px;line-height:46px;text-align:center;white-space:nowrap;color:#333">1500</div>
<div class="abs" style="left:944px;top:546px;width:83px;height:46px;line-height:46px;text-align:center;white-space:nowrap;color:#333">0.15</div>
<div class="abs" style="left:1028px;top:546px;width:103px;height:46px;line-height:46px;text-align:center;white-space:nowrap;color:#333">-</div>
<div class="abs" style="left:1132px;top:546px;width:215px;height:46px;line-height:46px;text-align:center;white-space:nowrap;color:#333">2022-04-19 14:57:41</div>
<div class="abs" style="left:1348px;top:546px;width:121px;height:46px;line-height:46px;text-align:center;white-space:nowrap;color:#333">M2</div>
<div class="abs" style="left:1470px;top:546px;width:215px;height:46px;line-height:46px;text-align:center;white-space:nowrap;color:#333">-</div>
<div class="abs" style="left:1686px;top:546px;width:97px;height:46px;line-height:46px;text-align:center;white-space:nowrap;color:#333">已赎回</div>
<div class="abs" style="left:1813px;top:558px;width:22px;height:22px;background:#18bc9c;border-radius:2px"></div>
<svg class="abs" style="left:1819px;top:564px;" width="10" height="10" viewBox="0 0 10 10"><path fill="#fff" d="M7.8 0L10 2.2 3.3 8.9 1.1 6.7zM.6 7.3l2 2L0 10z"/></svg>
<div class="abs" style="left:1839px;top:558px;width:21px;height:22px;background:#f75444;border-radius:2px"></div>
<svg class="abs" style="left:1845px;top:564px;" width="9" height="10" viewBox="0 0 9 10"><path fill="#fff" d="M2.7 0h3.6l.4 1H9v1.2H0V1h2.3zM.7 2.8h7.6l-.5 7.2H1.2z"/><path d="M3 4v5M4.5 4v5M6 4v5" stroke="#f75444" stroke-width=".6"/></svg>
<div class="abs" style="left:276px;top:608px;width:13px;height:13px;border:1px solid #767676;border-radius:2px;background:#fff"></div>
<div class="abs" style="left:305px;top:593px;width:62px;height:46px;line-height:46px;text-align:center;white-space:nowrap;color:#333">13</div>
<div class="abs" style="left:368px;top:593px;width:491px;height:46px;line-height:46px;text-align:center;white-space:nowrap;color:#333">0x27Ea54805da6094112eC0d6374EdCb63aBbFF5e2</div>
<div class="abs" style="left:860px;top:593px;width:83px;height:46px;line-height:46px;text-align:center;white-space:nowrap;color:#333">1500</div>
<div class="abs" style="left:944px;top:593px;width:83px;height:46px;line-height:46px;text-align:center;white-space:nowrap;color:#333">0.15</div>
<div class="abs" style="left:1028px;top:593px;width:103px;height:46px;line-height:46px;text-align:center;white-space:nowrap;color:#333">-</div>
<div class="abs" style="left:1132px;top:593px;width:215px;height:46px;line-height:46px;text-align:center;white-space:nowrap;color:#333">2022-04-19 14:49:48</div>
<div class="abs" style="left:1348px;top:593px;width:121px;height:46px;line-height:46px;text-align:center;white-space:nowrap;color:#333">M2</div>
<div class="abs" style="left:1470px;top:593px;width:215px;height:46px;line-height:46px;text-align:center;white-space:nowrap;color:#333">2022-04-19 00:00:00</div>
<div class="abs" style="left:1686px;top:593px;width:97px;height:46px;line-height:46px;text-align:center;white-space:nowrap;color:#333">已赎回</div>
<div class="abs" style="left:1813px;top:605px;width:22px;height:22px;background:#18bc9c;border-radius:2px"></div>
<svg class="abs" style="left:1819px;top:611px;" width="10" height="10" viewBox="0 0 10 10"><path fill="#fff" d="M7.8 0L10 2.2 3.3 8.9 1.1 6.7zM.6 7.3l2 2L0 10z"/></svg>
<div class="abs" style="left:1839px;top:605px;width:21px;height:22px;background:#f75444;border-radius:2px"></div>
<svg class="abs" style="left:1845px;top:611px;" width="9" height="10" viewBox="0 0 9 10"><path fill="#fff" d="M2.7 0h3.6l.4 1H9v1.2H0V1h2.3zM.7 2.8h7.6l-.5 7.2H1.2z"/><path d="M3 4v5M4.5 4v5M6 4v5" stroke="#f75444" stroke-width=".6"/></svg>
<div class="abs" style="left:260px;top:659px;color:#333;font-size:14px;line-height:17px;white-space:nowrap">显示第 1 到第 10 条记录，总共 21 条记录 每页显示</div>
<div class="abs" style="left:583px;top:652px;width:52px;height:32px;background:#f4f4f4;border:1px solid #ddd;border-radius:3px"></div>
<div class="abs" style="left:597px;top:660px;color:#333;font-size:12px;line-height:17px">10</div>
<svg class="abs" style="left:614px;top:666px;" width="8" height="4" viewBox="0 0 8 4"><path d="M0 4h8L4 0z" fill="#333"/></svg>
<div class="abs" style="left:639px;top:659px;color:#333;font-size:14px;line-height:17px">条记录</div>
<div class="abs" style="left:1545px;top:650px;width:233px;height:34px;border:1px solid #ddd;border-radius:3px;background:#fafafa"></div>
<div class="abs" style="left:1545px;top:650px;width:67px;height:34px;line-height:34px;text-align:center;color:#555;font-weight:normal;font-size:14px">上一页</div>
<div class="abs" style="left:1612px;top:650px;width:33px;height:34px;background:#444c69"></div>
<div class="abs" style="left:1612px;top:650px;width:33px;height:34px;line-height:34px;text-align:center;color:#fff;font-weight:bold;font-size:14px">1</div>
<div class="abs" style="left:1645px;top:651px;width:1px;height:32px;background:#ddd"></div>
<div class="abs" style="left:1645px;top:650px;width:32px;height:34px;line-height:34px;text-align:center;color:#555;font-weight:normal;font-size:14px">2</div>
<div class="abs" style="left:1677px;top:651px;width:1px;height:32px;background:#ddd"></div>
<div class="abs" style="left:1677px;top:650px;width:33px;height:34px;line-height:34px;text-align:center;color:#555;font-weight:normal;font-size:14px">3</div>
<div class="abs" style="left:1710px;top:651px;width:1px;height:32px;background:#ddd"></div>
<div class="abs" style="left:1710px;top:650px;width:68px;height:34px;line-height:34px;text-align:center;color:#555;font-weight:normal;font-size:14px">下一页</div>
<div class="abs" style="left:1783px;top:650px;width:50px;height:34px;border:1px solid #d2d6e6;background:#fff"></div>
<div class="abs" style="left:1838px;top:651px;width:52px;height:32px;border:1px solid #ddd;border-radius:3px;background:#f4f4f4;line-height:29px;text-align:center;color:#333;font-size:14px">跳转</div>
<div class="abs" style="left:1813px;top:903px;width:32px;height:10px;background:#7dc24b;border-radius:6px 0 0 0"></div>
<div class="abs" style="left:1843px;top:902px;width:77px;height:5px;background:#222;border-top:1px solid #fff"></div>
</body></html>
